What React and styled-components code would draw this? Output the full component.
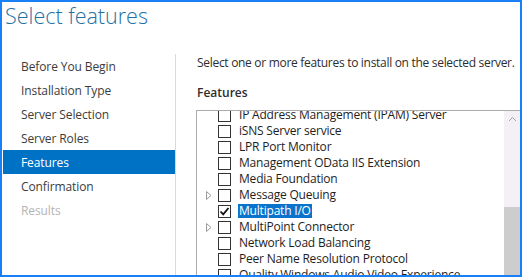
import React, { useLayoutEffect, useRef } from 'react';
import styled, { createGlobalStyle } from 'styled-components';

const FONT = `"Segoe UI", "Open Sans", "Noto Sans", sans-serif`;

const steps = [
  { label: 'Before You Begin' },
  { label: 'Installation Type' },
  { label: 'Server Selection' },
  { label: 'Server Roles' },
  { label: 'Features', active: true },
  { label: 'Confirmation' },
  { label: 'Results', disabled: true },
];

const features = [
  { name: 'IP Address Management (IPAM) Server' },
  { name: 'iSNS Server service' },
  { name: 'LPR Port Monitor' },
  { name: 'Management OData IIS Extension' },
  { name: 'Media Foundation' },
  { name: 'Message Queuing', expandable: true },
  { name: 'Multipath I/O', checked: true, selected: true },
  { name: 'MultiPoint Connector', expandable: true },
  { name: 'Network Load Balancing' },
  { name: 'Peer Name Resolution Protocol' },
  { name: 'Quality Windows Audio Video Experience' },
  { name: 'RAS Connection Manager Administration Kit (CMAK)' },
];

const App = () => {
  const viewportRef = useRef(null);

  // the list is scrolled a few pixels down, like in the wizard
  useLayoutEffect(() => {
    if (viewportRef.current) viewportRef.current.scrollTop = 4;
  }, []);

  return (
    <>
      <GlobalStyle />
      <Window>
        <Title>Select features</Title>
        <Body>
          <Nav>
            {steps.map((s) => (
              <NavItem key={s.label} $active={s.active} $disabled={s.disabled}>
                {s.label}
              </NavItem>
            ))}
          </Nav>
          <Content>
            <Intro>Select one or more features to install on the selected server.</Intro>
            <SectionLabel>Features</SectionLabel>
            <ListBox>
              <Viewport ref={viewportRef}>
                {features.map((f) => (
                  <Row key={f.name}>
                    <Expander>
                      {f.expandable && (
                        <svg width="6" height="9" viewBox="0 0 6 9">
                          <path d="M0.5 0.5 L5 4.5 L0.5 8.5 Z" fill="none" stroke="#9a9a9a" strokeWidth="1" />
                        </svg>
                      )}
                    </Expander>
                    <Checkbox>
                      {f.checked && (
                        <svg width="11" height="11" viewBox="0 0 11 11">
                          <path d="M1.5 5.5 L4.2 8.3 L9.5 2" fill="none" stroke="#111" strokeWidth="1.8" />
                        </svg>
                      )}
                    </Checkbox>
                    <Label $selected={f.selected}>{f.name}</Label>
                  </Row>
                ))}
              </Viewport>
              <ScrollBar>
                <ArrowButton>
                  <svg width="9" height="6" viewBox="0 0 9 6">
                    <path d="M1 5 L4.5 1.5 L8 5" fill="none" stroke="#a0a0a0" strokeWidth="1" />
                  </svg>
                </ArrowButton>
                <Thumb />
              </ScrollBar>
            </ListBox>
          </Content>
        </Body>
      </Window>
    </>
  );
};

export default App;

const GlobalStyle = createGlobalStyle`
  html, body {
    margin: 0;
    padding: 0;
    background: #fff;
    overflow: hidden;
  }
  body {
    font-family: ${FONT};
  }
`;

const Window = styled.div`
  box-sizing: border-box;
  width: 522px;
  height: 277px;
  border: 2px solid #1a80f8;
  background: #fff;
  display: flex;
  flex-direction: column;
  overflow: hidden;
`;

const Title = styled.h1`
  margin: 0;
  height: 52px;
  padding-left: 3px;
  font-family: ${FONT};
  font-weight: 300;
  font-size: 21.5px;
  line-height: 28px;
  color: #1f70a3;
  flex-shrink: 0;
`;

const Body = styled.div`
  flex: 1;
  display: flex;
  min-height: 0;
`;

const Nav = styled.div`
  width: 172px;
  padding-left: 1px;
  border-right: 1px solid #d9d9d9;
  flex-shrink: 0;
`;

const NavItem = styled.div`
  height: 24px;
  line-height: 26px;
  padding-left: 18px;
  font-size: 12px;
  letter-spacing: -0.1px;
  color: ${(p) => (p.$active ? '#fff' : p.$disabled ? '#b4b4b4' : '#3c3c3c')};
  background: ${(p) => (p.$active ? '#0072c6' : 'transparent')};
`;

const Content = styled.div`
  flex: 1;
  min-width: 0;
  padding: 1px 0 0 20px;
  display: flex;
  flex-direction: column;
`;

const Intro = styled.div`
  padding-left: 1px;
  font-size: 12px;
  letter-spacing: -0.3px;
  line-height: 16px;
  color: #2d2d2d;
  white-space: nowrap;
`;

const SectionLabel = styled.div`
  padding-left: 1px;
  margin: 14px 0 9px;
  font-size: 12px;
  font-weight: 600;
  line-height: 16px;
  color: #2d2d2d;
`;

const ListBox = styled.div`
  flex: 1;
  display: flex;
  min-height: 0;
  border-top: 1px solid #acacac;
  border-left: 1px solid #acacac;
`;

const Viewport = styled.div`
  flex: 1;
  min-width: 0;
  overflow: hidden;
`;

const Row = styled.div`
  height: 16px;
  display: flex;
  align-items: center;
  font-size: 12px;
  letter-spacing: -0.2px;
  color: #1e1e1e;
  white-space: nowrap;
`;

const Expander = styled.span`
  width: 21px;
  padding-left: 9px;
  box-sizing: border-box;
  display: flex;
  align-items: center;
  flex-shrink: 0;
`;

const Checkbox = styled.span`
  box-sizing: border-box;
  width: 13px;
  height: 13px;
  border: 1px solid #333;
  display: flex;
  align-items: center;
  justify-content: center;
  flex-shrink: 0;
  margin-right: 7px;
`;

const Label = styled.span`
  line-height: 14px;
  padding: 0 1px;
  color: ${(p) => (p.$selected ? '#fff' : 'inherit')};
  background: ${(p) => (p.$selected ? '#0a74cc' : 'transparent')};
`;

const ScrollBar = styled.div`
  width: 16px;
  flex-shrink: 0;
  background: #f5f0f5;
  display: flex;
  flex-direction: column;
  align-items: center;
`;

const ArrowButton = styled.div`
  height: 16px;
  display: flex;
  align-items: center;
  justify-content: center;
  width: 100%;
`;

const Thumb = styled.div`
  width: 100%;
  margin-top: 80px;
  flex: 1;
  background: #cdcdcd;
`;
